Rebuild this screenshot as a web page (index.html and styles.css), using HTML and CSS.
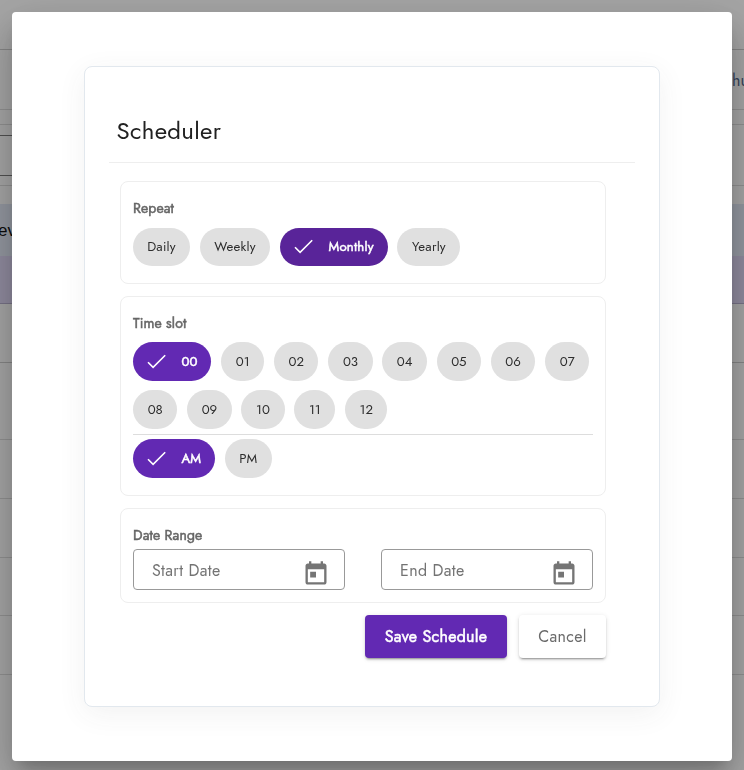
FILE: index.html
```html
<!DOCTYPE html>
<html lang="en">
<head>
<meta charset="utf-8">
<title>Scheduler</title>
<link rel="stylesheet" href="styles.css">
</head>
<body>
<div class="page">
  <div class="r r-top"></div>
  <div class="r r-user"><span>hu</span></div>
  <div class="r r-gap"></div>
  <div class="r r-search"><div class="search"></div></div>
  <div class="r r-space"></div>
  <div class="r r-head">ev</div>
  <div class="r r-filter"></div>
  <div class="r r-a"></div>
  <div class="r r-b"></div>
  <div class="r r-c"></div>
  <div class="r r-c"></div>
  <div class="r r-d"></div>
  <div class="r r-c"></div>
</div>
<div class="overlay">
  <div class="dialog">
    <div class="card">
      <h1 class="title"><span>Scheduler</span></h1>
      <div class="body">
        <section class="box repeat">
          <h2>Repeat</h2>
          <div class="chips">
            <button class="chip daily">Daily</button>
            <button class="chip weekly">Weekly</button>
            <button class="chip on monthly"><svg viewBox="0 0 20 16"><path d="M1 8.3 6.1 13.4 18.2 1.3"/></svg><span>Monthly</span></button>
            <button class="chip yearly">Yearly</button>
          </div>
        </section>
        <section class="box time">
          <h2>Time slot</h2>
          <div class="chips hours">
            <button class="chip on zero"><svg viewBox="0 0 20 16"><path d="M1 8.3 6.1 13.4 18.2 1.3"/></svg><span>00</span></button>
            <button class="chip n43">01</button>
            <button class="chip">02</button>
            <button class="chip">03</button>
            <button class="chip">04</button>
            <button class="chip">05</button>
            <button class="chip">06</button>
            <button class="chip">07</button>
            <button class="chip">08</button>
            <button class="chip">09</button>
            <button class="chip n43">10</button>
            <button class="chip n41">11</button>
            <button class="chip n42">12</button>
          </div>
          <div class="chips half">
            <button class="chip on am"><svg viewBox="0 0 20 16"><path d="M1 8.3 6.1 13.4 18.2 1.3"/></svg><span>AM</span></button>
            <button class="chip pm">PM</button>
          </div>
        </section>
        <section class="box range">
          <h2>Date Range</h2>
          <div class="fields">
            <div class="field"><span>Start Date</span><svg viewBox="0 0 24 24"><path d="M19 3h-1V1h-2v2H8V1H6v2H5c-1.11 0-1.99.9-1.99 2L3 19c0 1.1.89 2 2 2h14c1.1 0 2-.9 2-2V5c0-1.1-.9-2-2-2zm0 16H5V8h14v11zM7 10h5v5H7z"/></svg></div>
            <div class="field"><span>End Date</span><svg viewBox="0 0 24 24"><path d="M19 3h-1V1h-2v2H8V1H6v2H5c-1.11 0-1.99.9-1.99 2L3 19c0 1.1.89 2 2 2h14c1.1 0 2-.9 2-2V5c0-1.1-.9-2-2-2zm0 16H5V8h14v11zM7 10h5v5H7z"/></svg></div>
          </div>
        </section>
        <div class="actions">
          <button class="btn save">Save Schedule</button>
          <button class="btn cancel">Cancel</button>
        </div>
      </div>
    </div>
  </div>
</div>
</body>
</html>
```
FILE: styles.css
```css
* { box-sizing: border-box; }
html, body { margin: 0; height: 770px; overflow: hidden; }
body { font-family: Jost, Lato, sans-serif; background: #fff; color: #212121; }
h1, h2 { margin: 0; font-weight: 400; }
button { border: 0; font-family: inherit; padding: 0; white-space: nowrap; }

.page { height: 770px; background: #f4f4f4; }
.r { border-bottom: 1px solid #d4d4d4; }
.r-top { height: 50px; border-color: #c4c4c4; }
.r-user { height: 60px; display: flex; justify-content: flex-end; align-items: center; font-size: 16px; line-height: 24px; color: #4c6084; }
.r-user span { width: 12px; padding-top: 2px; }
.r-gap { height: 15px; }
.r-search { height: 61px; padding-top: 10px; }
.search { width: 200px; height: 41px; border: 1px solid #777; border-left: 0; }
.r-space { height: 18px; border: 0; }
.r-head { height: 52px; border: 0; background: #d9dfec; font: 17px/54px "Liberation Sans", sans-serif; text-indent: -2px; color: #111; }
.r-filter { height: 48px; background: #d4cdea; border-color: #b0a9c6; }
.r-a { height: 59px; border-color: #c4c4c4; }
.r-b { height: 77px; }
.r-c { height: 59px; }
.r-d { height: 58px; }

.overlay { position: fixed; inset: 0; padding: 12px 12px 9px; background: rgba(0,0,0,.32); }
.dialog { height: 749px; padding: 54px 72px; border-radius: 4px; background: #fff;
  box-shadow: 0 11px 15px -7px rgba(0,0,0,.2), 0 24px 38px 3px rgba(0,0,0,.14), 0 9px 46px 8px rgba(0,0,0,.12); }
.card { height: 641px; padding: 31px 24px 0; border: 1px solid #e2e8ee; border-radius: 8px; background: #fff;
  box-shadow: 0 7px 29px rgba(70,70,75,.07); }
.title { height: 65px; padding-left: 7.5px; border-bottom: 1px solid #eee; font-size: 24px; line-height: 66px; }
.title span { letter-spacing: .32px; }
.body { width: 486px; margin: 18px 0 0 11px; }
.box { border: 1px solid #eee; border-radius: 8px; padding: 0 12px; }
.box + .box { margin-top: 12px; }
.box h2 { font-size: 14px; letter-spacing: .12px; color: #666; -webkit-text-stroke: .5px #666; white-space: nowrap; }
.repeat { height: 103px; }
.repeat h2 { height: 46px; line-height: 53px; }
.time { height: 200px; }
.time h2 { height: 45px; line-height: 53px; }
.range { height: 95px; }
.range h2 { height: 40px; line-height: 53px; }

.chips { display: flex; flex-wrap: wrap; gap: 9px 9.8px; }
.chip { display: flex; align-items: center; justify-content: center; width: 44.4px; height: 39px; border-radius: 20px; background: #e0e0e0; color: #2d2d2d; font-size: 13.2px; line-height: 20px; }
.repeat .chip { height: 38px; letter-spacing: .2px; }
.chip.on { justify-content: space-between; padding: 0 14px; background: #6229b3; color: #fff; -webkit-text-stroke: .5px #fff; }
.on svg { width: 20px; height: 16px; fill: none; stroke: #fff; stroke-width: 1.6; }
.daily { width: 57px; }
.weekly { width: 70.3px; }
.chip.monthly { width: 107.8px; background: #592499; }
.yearly { width: 63px; }
.zero { width: 78.3px; }
.n43 { width: 43.2px; }
.n42 { width: 42.2px; }
.n41 { width: 41px; }
.half { margin-top: 5px; border-top: 1px solid #ddd; padding-top: 4px; }
.am { width: 82px; }
.pm { width: 47px; }

.fields { display: flex; justify-content: space-between; }
.field { width: 212px; height: 41px; border: 1px solid #999; border-radius: 4px; display: flex; justify-content: space-between; padding: 0 14px 0 18px; color: #737373; font-size: 16px; line-height: 42px; letter-spacing: .35px; }
.field svg { width: 28px; height: 28px; margin-top: 10px; fill: #757575; }

.actions { display: flex; justify-content: flex-end; gap: 12px; margin-top: 12px; }
.btn { height: 43px; border-radius: 4px; font-size: 16px; letter-spacing: .3px; box-shadow: 0 3px 1px -2px rgba(0,0,0,.2), 0 2px 2px rgba(0,0,0,.14), 0 1px 5px rgba(0,0,0,.12); }
.save { width: 142px; background: #6229b3; color: #fff; -webkit-text-stroke: .5px #fff; }
.cancel { width: 87px; background: #fff; color: #6b6b6b; }
```
